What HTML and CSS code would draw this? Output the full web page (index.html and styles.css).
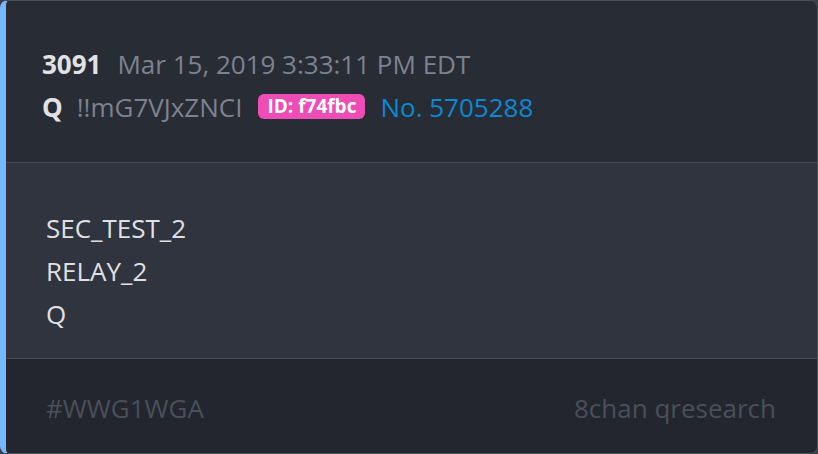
FILE: index.html
```html
<!DOCTYPE html>
<html>
<head>
<meta charset="utf-8">
<link rel="stylesheet" href="styles.css">
</head>
<body>
<div class="card">
  <div class="head">
    <div class="line"><span class="num">3091</span><span class="time">Mar 15, 2019 3:33:11 PM EDT</span></div>
    <div class="line"><span class="name">Q</span><span class="trip">!!mG7VJxZNCI</span><span class="badge">ID: f74fbc</span><span class="no">No. 5705288</span></div>
  </div>
  <div class="body">
    <div>SEC_TEST_2</div>
    <div>RELAY_2</div>
    <div>Q</div>
  </div>
  <div class="foot">
    <span>#WWG1WGA</span>
    <span>8chan qresearch</span>
  </div>
</div>
</body>
</html>
```
FILE: styles.css
```css
html, body { margin: 0; padding: 0; background: #3a3e47; }
body { font-family: "Open Sans", sans-serif; }
.card {
  box-sizing: border-box;
  width: 818px;
  height: 454px;
  border: 1px solid #4b4f59;
  border-left: 6px solid #76b8fb;
  border-radius: 8px;
  overflow: hidden;
  display: flex;
  flex-direction: column;
  background: #282c35;
}
.head {
  height: 162px;
  flex: none;
  box-sizing: border-box;
  padding: 41px 36px 0;
  background: #282c35;
  border-bottom: 1px solid #454a54;
}
.line { display: flex; align-items: center; height: 43px; font-size: 26px; }
.num { font-weight: 700; color: #e2e2e4; margin-right: 16px; }
.time { color: #7d8290; }
.name { font-weight: 700; color: #e2e2e4; margin-right: 14px; }
.trip { color: #7d8290; margin-right: 16px; }
.badge {
  background: #ee4db5; color: #fff; font-weight: 700; font-size: 19px;
  padding: 0 9px; border-radius: 6px; line-height: 25px; margin-right: 15px;
}
.no { color: #0d88d2; }
.body {
  height: 196px;
  flex: none;
  box-sizing: border-box;
  padding: 44px 40px 0;
  background: #2f343e;
  border-bottom: 1px solid #454a54;
  color: #e0e0e2;
  font-size: 26px;
  line-height: 43px;
}
.foot {
  flex: 1;
  display: flex;
  justify-content: space-between;
  align-items: center;
  padding: 3px 41px 0 40px;
  background: #23262e;
  color: #4a4f5a;
  font-size: 26px;
}
```
